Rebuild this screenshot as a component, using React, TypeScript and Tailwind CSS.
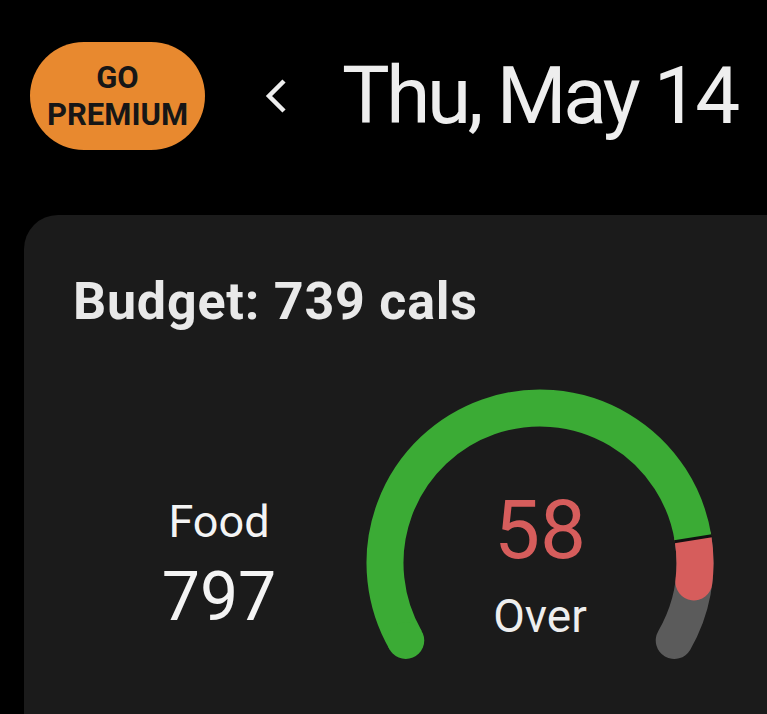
const font = { fontFamily: "Roboto, 'Noto Sans', sans-serif" };

const CX = 175;
const CY = 175;
const R = 155;

function pt(deg: number) {
  const a = (deg * Math.PI) / 180;
  return [CX + R * Math.cos(a), CY - R * Math.sin(a)];
}

function arc(from: number, to: number) {
  const [x1, y1] = pt(from);
  const [x2, y2] = pt(to);
  const large = from - to > 180 ? 1 : 0;
  return `M ${x1} ${y1} A ${R} ${R} 0 ${large} 1 ${x2} ${y2}`;
}

function Gauge() {
  const split = 9;
  const redEnd = -7;
  const [sx, sy] = pt(210);
  const a = (split * Math.PI) / 180;
  return (
    <svg width={350} height={285} viewBox="0 0 350 285" className="col-start-1 row-start-1">
      <path d={arc(split, -30)} fill="none" stroke="#5b5b5b" strokeWidth={37} strokeLinecap="round" />
      <path d={arc(split, redEnd)} fill="none" stroke="#d65d5c" strokeWidth={37} strokeLinecap="round" />
      <path d={arc(210, split)} fill="none" stroke="#3bab35" strokeWidth={37} strokeLinecap="butt" />
      <circle cx={sx} cy={sy} r={18.5} fill="#3bab35" />
      <line
        x1={CX + 136 * Math.cos(a)}
        y1={CY - 136 * Math.sin(a)}
        x2={CX + 174 * Math.cos(a)}
        y2={CY - 174 * Math.sin(a)}
        stroke="#111111"
        strokeWidth={3}
      />
    </svg>
  );
}

export default function App() {
  return (
    <div className="h-[714px] w-[767px] overflow-hidden bg-black" style={font}>
      <header className="flex items-center pl-[30px] pt-[42px]">
        <button className="flex h-[108px] w-[175px] flex-col items-center justify-center rounded-full bg-[#e8892f] text-[31px] font-bold leading-[37px] text-[#161616]">
          <span>GO</span>
          <span>PREMIUM</span>
        </button>
        <svg width={24} height={36} viewBox="0 0 24 36" className="ml-[60px]">
          <polyline points="19,3 4,18 19,33" fill="none" stroke="#eeeeee" strokeWidth={4.5} />
        </svg>
        <h1 className="ml-[53px] text-[80px] font-normal leading-none tracking-[-0.042em] text-[#eeeeee]">
          Thu, May 14
        </h1>
      </header>

      <section className="ml-[24px] mt-[65px] h-[600px] w-[800px] rounded-[34px] bg-[#1b1b1b] pl-[49px] pt-[61px]">
        <h2 className="text-[52px] font-bold leading-none tracking-[0.015em] text-[#e9e9e9]">
          Budget: 739 cals
        </h2>

        <div className="mt-[60px] flex">
          <div className="flex w-[292px] flex-col items-center pt-[111px] text-[#f4f4f4]">
            <span className="text-[45px] leading-none">Food</span>
            <span className="mt-[19px] text-[68px] leading-none">797</span>
          </div>

          <div className="grid w-[350px]">
            <Gauge />
            <div className="col-start-1 row-start-1 flex flex-col items-center pt-[101px]">
              <span className="text-[82px] leading-none text-[#d65d5c]">58</span>
              <span className="mt-[22px] text-[46px] leading-none text-[#eeeeee]">Over</span>
            </div>
          </div>
        </div>
      </section>
    </div>
  );
}
